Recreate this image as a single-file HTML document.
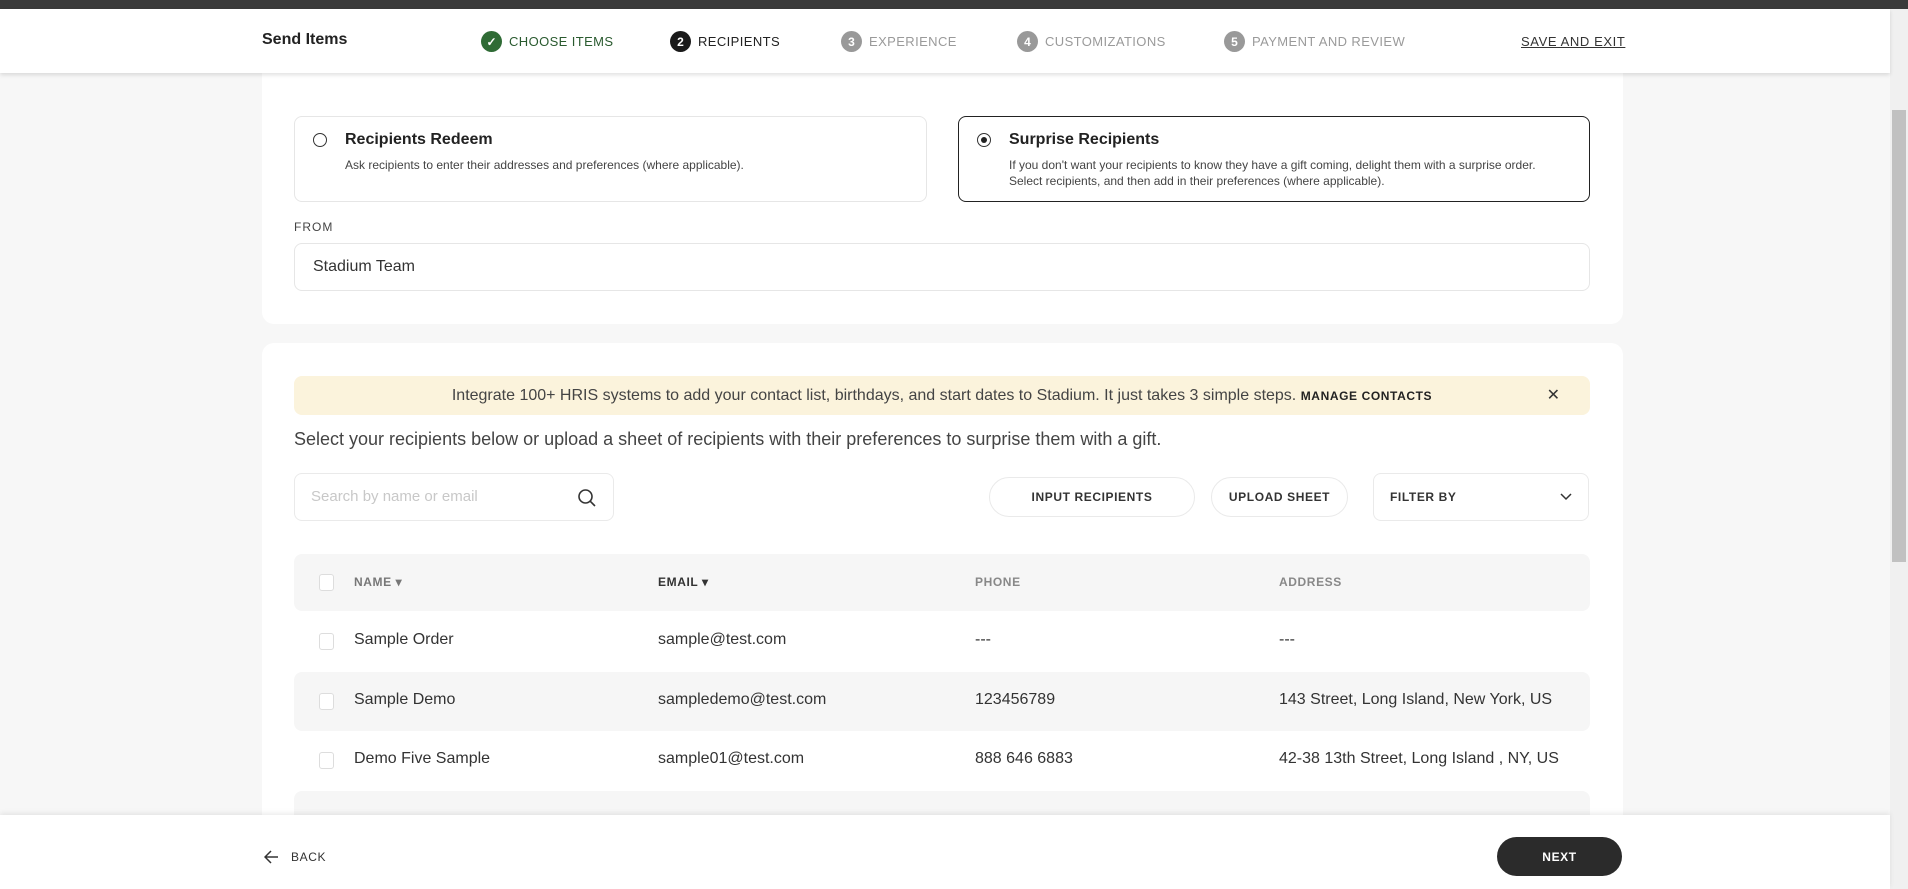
<!DOCTYPE html>
<html><head><meta charset="utf-8"><style>
*{box-sizing:border-box;margin:0;padding:0}
html,body{width:1908px;height:889px;overflow:hidden}
body{background:#f7f7f7;font-family:"Liberation Sans Narrow","Liberation Sans",sans-serif;color:#333;position:relative}
.abs{position:absolute}
.topbar{left:0;top:0;width:1908px;height:9px;background:#3a3a3a}
.header{left:0;top:9px;width:1890px;height:64px;background:#fff;box-shadow:0 2px 4px rgba(0,0,0,.12);z-index:3}
.step{position:absolute;top:22px;font-size:13px;letter-spacing:0.4px;display:flex;align-items:center;gap:7px;color:#9a9a9a}
.c{width:21px;height:21px;border-radius:50%;background:#999;color:#fff;font-size:12px;font-weight:bold;display:flex;align-items:center;justify-content:center;letter-spacing:0}
.card{background:#fff;border-radius:12px}
.opt{border:1px solid #e6e6e6;border-radius:8px;background:#fff}
.radio{width:14px;height:14px;border-radius:50%;border:1.5px solid #333;position:absolute;left:18px;top:16px}
.opt h3{position:absolute;left:50px;top:14px;font-size:16px;color:#222}
.opt p{position:absolute;left:50px;top:40px;font-size:12px;line-height:16px;color:#444}
.btn{position:absolute;border:1px solid #eaeaea;border-radius:24px;background:#fff;font-size:12px;letter-spacing:0.6px;font-weight:bold;color:#333;display:flex;align-items:center;justify-content:center}
.cb{position:absolute;left:25px;width:15px;height:17px;border:1px solid #ddd;border-radius:3px;background:#fff}
.row{position:absolute;left:294px;width:1296px;font-size:16px;color:#333}
.row span{position:absolute}
</style></head><body>
<div class="abs topbar"></div>
<div class="abs header">
 <div class="abs" style="left:262px;top:22px;font-size:16px;font-weight:bold;color:#222">Send Items</div>
 <div class="step" style="left:481px;color:#2a5a2f"><div class="c" style="background:#2f6b35">✓</div>CHOOSE ITEMS</div>
 <div class="step" style="left:670px;color:#222"><div class="c" style="background:#1a1a1a">2</div>RECIPIENTS</div>
 <div class="step" style="left:841px"><div class="c">3</div>EXPERIENCE</div>
 <div class="step" style="left:1017px"><div class="c">4</div>CUSTOMIZATIONS</div>
 <div class="step" style="left:1224px"><div class="c">5</div>PAYMENT AND REVIEW</div>
 <div class="abs" style="left:1521px;top:25px;font-size:13px;letter-spacing:0.6px;text-decoration:underline;color:#333">SAVE AND EXIT</div>
</div>
<div class="abs" style="left:1890px;top:9px;width:18px;height:880px;background:#f0f0f0"></div>
<div class="abs" style="left:1892px;top:110px;width:14px;height:452px;background:#c1c1c1"></div>

<div class="abs card" style="left:262px;top:60px;width:1361px;height:264px"></div>
<div class="abs opt" style="left:294px;top:116px;width:633px;height:86px"><div class="radio"></div><h3>Recipients Redeem</h3><p>Ask recipients to enter their addresses and preferences (where applicable).</p></div>
<div class="abs opt" style="left:958px;top:116px;width:632px;height:86px;border-color:#222"><div class="radio"><div style="width:6px;height:6px;border-radius:50%;background:#222;margin:2.5px"></div></div><h3>Surprise Recipients</h3><p>If you don't want your recipients to know they have a gift coming, delight them with a surprise order.<br>Select recipients, and then add in their preferences (where applicable).</p></div>
<div class="abs" style="left:294px;top:220px;font-size:12px;letter-spacing:1px;color:#444">FROM</div>
<div class="abs" style="left:294px;top:243px;width:1296px;height:48px;border:1px solid #e6e6e6;border-radius:8px;padding:14px 18px;font-size:16px;color:#333">Stadium Team</div>

<div class="abs card" style="left:262px;top:343px;width:1361px;height:546px;border-radius:12px 12px 0 0"></div>
<div class="abs" style="left:294px;top:376px;width:1296px;height:39px;background:#fbf3dc;border-radius:8px;font-size:16px;color:#444;text-align:center;line-height:39px">Integrate 100+ HRIS systems to add your contact list, birthdays, and start dates to Stadium. It just takes 3 simple steps. <b style="font-size:12px;letter-spacing:0.6px;color:#222">MANAGE CONTACTS</b><span style="position:absolute;right:30px;font-size:16px;color:#333">✕</span></div>
<div class="abs" style="left:294px;top:429px;font-size:18px;color:#444">Select your recipients below or upload a sheet of recipients with their preferences to surprise them with a gift.</div>
<div class="abs" style="left:294px;top:473px;width:320px;height:48px;border:1px solid #eaeaea;border-radius:8px;padding:14px 16px;font-size:15px;color:#c8c8c8">Search by name or email
 <svg style="position:absolute;right:16px;top:14px" width="20" height="20" viewBox="0 0 20 20"><circle cx="8.5" cy="8.5" r="6.5" fill="none" stroke="#333" stroke-width="1.6"/><path d="M13.3 13.3L18 18" stroke="#333" stroke-width="1.6"/></svg></div>
<div class="btn" style="left:989px;top:477px;width:206px;height:40px">INPUT RECIPIENTS</div>
<div class="btn" style="left:1211px;top:477px;width:137px;height:40px">UPLOAD SHEET</div>
<div class="abs" style="left:1373px;top:473px;width:216px;height:48px;border:1px solid #eaeaea;border-radius:8px;padding:16px;font-size:12px;letter-spacing:0.6px;font-weight:bold;color:#333">FILTER BY
 <svg style="position:absolute;right:16px;top:19px" width="12" height="8" viewBox="0 0 12 8"><path d="M1 1l5 5 5-5" fill="none" stroke="#333" stroke-width="1.5"/></svg></div>

<div class="abs" style="left:294px;top:554px;width:1296px;height:57px;background:#f6f6f6;border-radius:8px"></div>
<div class="row" style="top:554px;height:57px;font-size:12px;letter-spacing:0.6px;color:#888;font-weight:bold"><div class="cb" style="top:20px"></div>
 <span style="left:60px;top:21px;color:#777">NAME ▾</span><span style="left:364px;top:21px;color:#333">EMAIL ▾</span><span style="left:681px;top:21px">PHONE</span><span style="left:985px;top:21px">ADDRESS</span></div>
<div class="row" style="top:611px;height:61px"><div class="cb" style="top:22px"></div><span style="left:60px;top:20px">Sample Order</span><span style="left:364px;top:20px">sample@test.com</span><span style="left:681px;top:20px">---</span><span style="left:985px;top:20px">---</span></div>
<div class="row" style="top:672px;height:59px;background:#f6f6f6;border-radius:8px"><div class="cb" style="top:21px"></div><span style="left:60px;top:19px">Sample Demo</span><span style="left:364px;top:19px">sampledemo@test.com</span><span style="left:681px;top:19px">123456789</span><span style="left:985px;top:19px">143 Street, Long Island, New York, US</span></div>
<div class="row" style="top:731px;height:60px"><div class="cb" style="top:21px"></div><span style="left:60px;top:19px">Demo Five Sample</span><span style="left:364px;top:19px">sample01@test.com</span><span style="left:681px;top:19px">888 646 6883</span><span style="left:985px;top:19px">42-38 13th Street, Long Island , NY, US</span></div>
<div class="row" style="top:791px;height:60px;background:#f6f6f6;border-radius:8px"></div>

<div class="abs" style="left:0;top:815px;width:1890px;height:74px;background:#fff;box-shadow:0 -2px 5px rgba(0,0,0,.08)">
 <svg style="position:absolute;left:264px;top:35px" width="15" height="14" viewBox="0 0 15 14"><path d="M14 7H2M7 1L1 7l6 6" fill="none" stroke="#333" stroke-width="1.5"/></svg>
 <div class="abs" style="left:291px;top:35px;font-size:12px;letter-spacing:0.6px;color:#333">BACK</div>
 <div class="abs" style="left:1497px;top:22px;width:125px;height:39px;border-radius:20px;background:#2b2b2b;color:#fff;font-size:12px;font-weight:bold;letter-spacing:0.6px;display:flex;align-items:center;justify-content:center">NEXT</div>
</div>
</body></html>
